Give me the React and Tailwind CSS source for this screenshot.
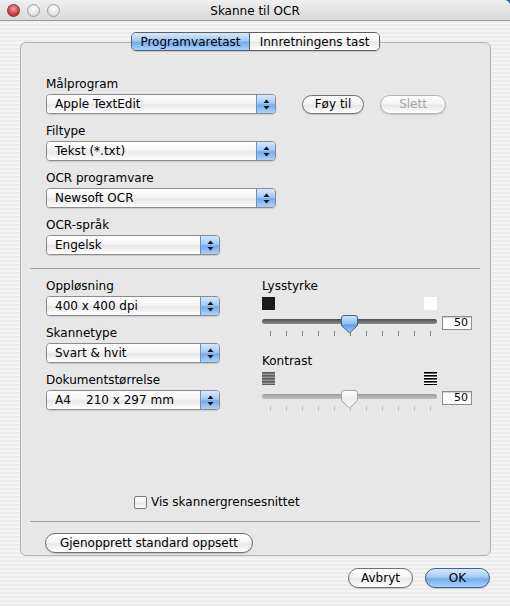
import React from 'react';

const aquaBlue = 'bg-[linear-gradient(180deg,#d6e8fc_0%,#a3cbf5_45%,#74abec_55%,#a9d2fa_100%)]';
const aquaWhite = 'bg-[linear-gradient(180deg,#ffffff_0%,#f5f5f5_45%,#e7e7e7_55%,#ffffff_100%)]';

const Arrows = () => (
  <svg width="7" height="11" viewBox="0 0 7 11">
    <path d="M3.5 0.5 L6.5 4 H0.5 Z" fill="#111" />
    <path d="M3.5 10.5 L6.5 7 H0.5 Z" fill="#111" />
  </svg>
);

const Popup = ({ value, w }) => (
  <div className={`flex h-[20px] ${w} overflow-hidden rounded-[4px] border border-[#8b8b8b] shadow-[0_1px_1px_rgba(0,0,0,0.12)]`}>
    <div className={`flex-1 whitespace-pre pl-[8px] leading-[18px] ${aquaWhite}`}>{value}</div>
    <div className={`flex w-[19px] items-center justify-center border-l border-[#6e8fc2] ${aquaBlue}`}>
      <Arrows />
    </div>
  </div>
);

const Label = ({ children, className = '' }) => (
  <div className={`h-[16px] leading-[16px] ${className}`}>{children}</div>
);

const Field = ({ label, value, w, first }) => (
  <div className={first ? '' : 'mt-[9px]'}>
    <Label>{label}</Label>
    <div className="mt-[2px]">
      <Popup value={value} w={w} />
    </div>
  </div>
);

const Button = ({ children, w, disabled, blue }) => (
  <button
    className={`flex h-[19px] ${w} items-center justify-center rounded-full border leading-none ${
      blue
        ? `border-[#3d5f98] ${aquaBlue}`
        : disabled
        ? `border-[#b4b4b4] text-[#a4a4a4] ${aquaWhite}`
        : `border-[#707070] ${aquaWhite}`
    } shadow-[0_1px_1px_rgba(0,0,0,0.15)]`}
  >
    {children}
  </button>
);

const Thumb = ({ active }) => (
  <svg width="17" height="19" viewBox="0 0 17 19" className="absolute left-[79px] top-[2px]">
    <defs>
      <linearGradient id={active ? 'tb' : 'tw'} x1="0" y1="0" x2="0" y2="1">
        {active ? (
          <>
            <stop offset="0" stopColor="#d5e8fc" />
            <stop offset="0.45" stopColor="#8fbff3" />
            <stop offset="0.55" stopColor="#5f9fe9" />
            <stop offset="1" stopColor="#a6d0fa" />
          </>
        ) : (
          <>
            <stop offset="0" stopColor="#ffffff" />
            <stop offset="0.5" stopColor="#ececec" />
            <stop offset="1" stopColor="#fafafa" />
          </>
        )}
      </linearGradient>
    </defs>
    <path
      d="M3 0.5 H14 Q16.5 0.5 16.5 3 V10.5 L8.5 18 L0.5 10.5 V3 Q0.5 0.5 3 0.5 Z"
      fill={`url(#${active ? 'tb' : 'tw'})`}
      stroke={active ? '#3f5f90' : '#a3a3a3'}
    />
  </svg>
);

const Slider = ({ active }) => (
  <div>
    <div className="flex items-start">
      <div className="relative h-[18px] w-[175px]">
        <div
          className={`absolute left-0 right-0 top-[6px] h-[5px] rounded-full ${
            active
              ? 'bg-[linear-gradient(180deg,#4f4f4f,#8d8d8d)]'
              : 'bg-[linear-gradient(180deg,#9d9d9d,#c4c4c4)]'
          }`}
        />
        <Thumb active={active} />
      </div>
      <div className="ml-[5px] mt-[3px] h-[14px] w-[30px] border border-[#8d8d8d] bg-white pr-[3px] text-right text-[11px] leading-[12px] shadow-[inset_0_1px_1px_rgba(0,0,0,0.2)]">
        50
      </div>
    </div>
    <div className="flex w-[175px] justify-between pl-[8px] pr-[6px]">
      {Array.from({ length: 11 }).map((_, i) => (
        <div key={i} className={`h-[5px] w-px ${active ? 'bg-[#8a8a8a]' : 'bg-[#c0c0c0]'}`} />
      ))}
    </div>
  </div>
);

const ContrastIcon = ({ high }) => (
  <svg width="13" height="13" viewBox="0 0 13 13">
    <rect x="0" y="0" width="13" height="13" fill={high ? '#ffffff' : '#9a9a9a'} />
    {[0, 3, 6, 9, 12].map((y) => (
      <rect key={y} x="0" y={y} width="13" height="1.6" fill={high ? '#000' : '#5c5c5c'} />
    ))}
  </svg>
);

export default function App() {
  return (
    <div className="h-[606px] w-[510px] bg-[#3a5db4] font-['DejaVu_Sans',sans-serif] text-[12px] text-black">
      <div className="flex h-full flex-col overflow-hidden rounded-tr-[6px] bg-[repeating-linear-gradient(180deg,#ececec_0px,#ececec_2px,#f4f4f4_2px,#f4f4f4_4px)]">
        {/* title bar */}
        <div className="relative flex h-[21px] items-center justify-center border-b border-[#9c9c9c] bg-[linear-gradient(180deg,#f0f0f0,#d9d9d9)]">
          <div className="absolute left-[7px] top-[4px] flex gap-[7px]">
            <div className="h-[13px] w-[13px] rounded-full border border-[#8a2a2c] bg-[radial-gradient(circle_at_50%_35%,#f6a0a2,#d23f44_60%,#b02c30)]" />
            <div className="h-[13px] w-[13px] rounded-full border border-[#9d9d9d] bg-[radial-gradient(circle_at_50%_35%,#ffffff,#e2e2e2_60%,#cfcfcf)]" />
            <div className="h-[13px] w-[13px] rounded-full border border-[#9d9d9d] bg-[radial-gradient(circle_at_50%_35%,#ffffff,#e2e2e2_60%,#cfcfcf)]" />
          </div>
          <span className="mt-[1px]">Skanne til OCR</span>
        </div>

        <div className="pl-[20px] pt-[21px]">
          <div className="relative flex h-[514px] w-[471px] flex-col rounded-[6px] border border-[#b1b1b1] bg-[#e7e7e7]">
            {/* tabs */}
            <div className="absolute left-[110px] top-[-11px] flex h-[19px] overflow-hidden rounded-[5px] border border-[#5e5e5e] shadow-[0_1px_1px_rgba(0,0,0,0.15)]">
              <div className={`flex w-[118px] items-center justify-center border-r border-[#5e5e5e] ${aquaBlue}`}>
                Programvaretast
              </div>
              <div className={`flex w-[129px] items-center justify-center ${aquaWhite}`}>Innretningens tast</div>
            </div>

            {/* upper section */}
            <div className="pl-[25px] pt-[33px]">
              <Label>Målprogram</Label>
              <div className="mt-[2px] flex items-center">
                <Popup value="Apple TextEdit" w="w-[230px]" />
                <div className="ml-[26px] flex gap-[16px]">
                  <Button w="w-[62px]">Føy til</Button>
                  <Button w="w-[66px]" disabled>
                    Slett
                  </Button>
                </div>
              </div>
              <Field label="Filtype" value="Tekst (*.txt)" w="w-[230px]" />
              <Field label="OCR programvare" value="Newsoft OCR" w="w-[230px]" />
              <Field label="OCR-språk" value="Engelsk" w="w-[174px]" />
            </div>

            <div className="ml-[9px] mt-[13px] h-px w-[450px] bg-[#a2a2a2]" />

            {/* lower section */}
            <div className="flex pl-[25px] pt-[9px]">
              <div className="w-[174px]">
                <Field first label="Oppløsning" value="400 x 400 dpi" w="w-[174px]" />
                <Field label="Skannetype" value="Svart & hvit" w="w-[174px]" />
                <Field label="Dokumentstørrelse" value="A4    210 x 297 mm" w="w-[174px]" />
              </div>
              <div className="ml-[42px] w-[212px]">
                <Label>Lysstyrke</Label>
                <div className="mt-[3px] flex w-[175px] justify-between">
                  <div className="h-[13px] w-[13px] bg-[#1a1a1a]" />
                  <div className="h-[13px] w-[13px] bg-white" />
                </div>
                <div className="mt-[3px]">
                  <Slider active />
                </div>
                <Label className="mt-[17px]">Kontrast</Label>
                <div className="mt-[3px] flex w-[175px] justify-between">
                  <ContrastIcon />
                  <ContrastIcon high />
                </div>
                <div className="mt-[3px]">
                  <Slider />
                </div>
              </div>
            </div>

            {/* bottom part */}
            <div className="mt-auto pb-[2px]">
              <div className="ml-[113px] flex items-center">
                <div className={`h-[13px] w-[13px] rounded-[2px] border border-[#7c7c7c] ${aquaWhite}`} />
                <span className="ml-[4px] leading-[13px]">Vis skannergrensesnittet</span>
              </div>
              <div className="ml-[9px] mt-[12px] h-px w-[450px] bg-[#a2a2a2]" />
              <div className="ml-[24px] mt-[11px]">
                <Button w="w-[208px] h-[20px]">Gjenopprett standard oppsett</Button>
              </div>
            </div>
          </div>
        </div>

        <div className="mt-[12px] flex justify-end gap-[12px] pr-[20px]">
          <Button w="w-[65px] h-[20px]">Avbryt</Button>
          <Button w="w-[65px] h-[20px]" blue>
            OK
          </Button>
        </div>
      </div>
    </div>
  );
}
